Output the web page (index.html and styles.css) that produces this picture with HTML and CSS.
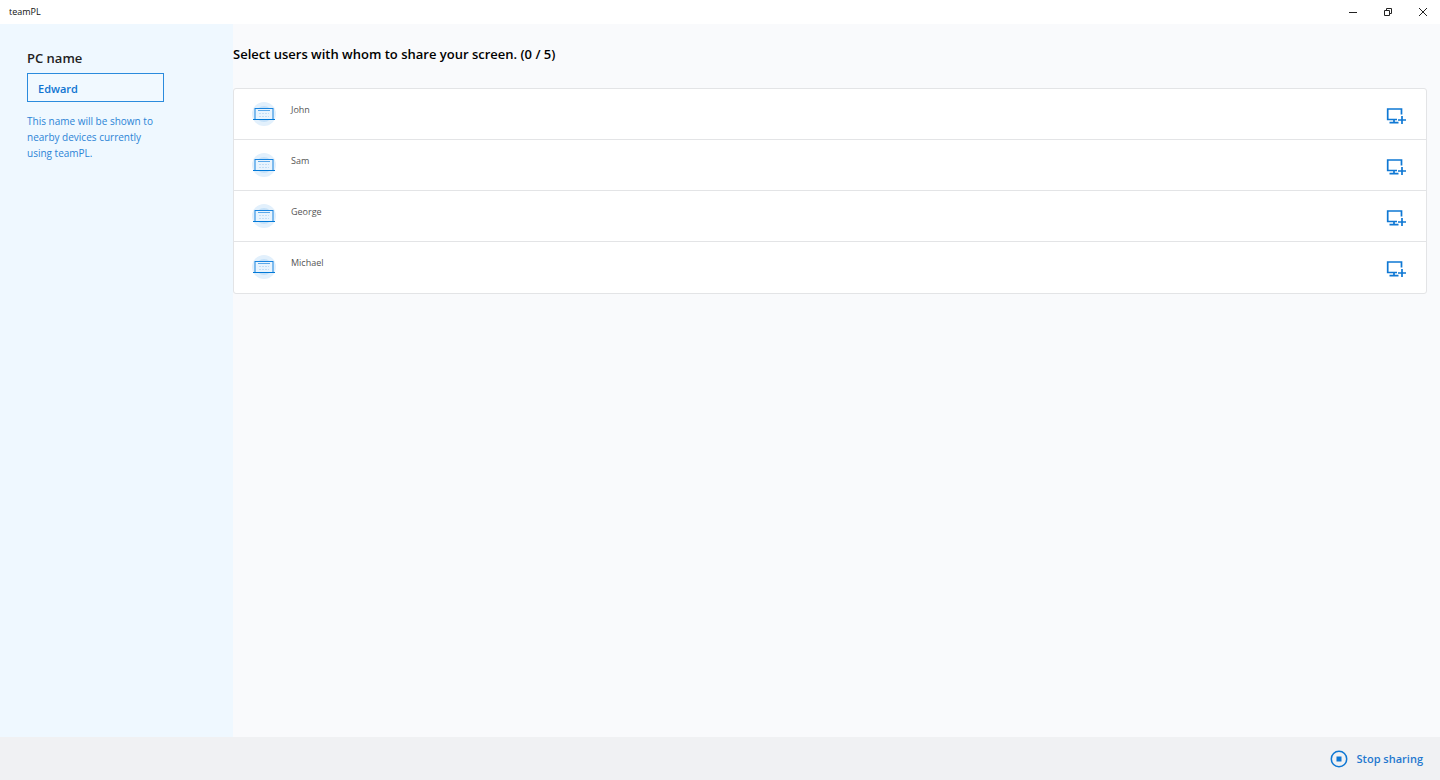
FILE: index.html
```html
<!DOCTYPE html>
<html lang="en">
<head>
    <meta charset="UTF-8">
    <meta name="viewport" content="width=device-width, initial-scale=1.0">
    <title>teamPL</title>
    <link rel="stylesheet" href="styles.css">
</head>
<body>
    <svg class="sprite" aria-hidden="true">
        <symbol id="laptop" viewBox="0 0 24 24">
            <circle cx="12" cy="12" r="12" fill="#e2f0fc"/>
            <circle cx="12" cy="12" r="8" fill="#c5e1f9"/>
            <rect x="3" y="6.500" width="18" height="11" fill="#e8f4fe" stroke="#1683df"/>
            <path d="M6 8.500h12" stroke="#5ba9ea"/>
            <path d="M7 11.500h10M7 14.500h10" stroke="#c2def6" stroke-dasharray="2 1"/>
            <path d="M1 17.500h22" stroke="#0078d7"/>
        </symbol>
        <symbol id="share" viewBox="0 0 20 18">
            <path d="M15.500 7.500V2H1.700v10.500h9.300M8 13v3M3.500 15.600h9M16 9v8M12 13h8" fill="none" stroke="#0f78d4" stroke-width="1.700"/>
        </symbol>
    </svg>

    <header class="titlebar">
        <span class="app-name">teamPL</span>
        <div class="window-buttons">
            <button type="button" aria-label="Minimize">
                <svg width="10" height="10" viewBox="0 0 10 10"><path d="M1 5.500h8"/></svg>
            </button>
            <button type="button" aria-label="Restore">
                <svg width="10" height="10" viewBox="0 0 10 10"><path d="M1.500 3.500h5v5h-5zM3.500 3.500v-2h5v5h-2"/></svg>
            </button>
            <button type="button" aria-label="Close">
                <svg width="10" height="10" viewBox="0 0 10 10"><path d="M1 1l8 8M9 1l-8 8"/></svg>
            </button>
        </div>
    </header>

    <div class="content">
        <aside class="sidebar">
            <label for="pcName">PC name</label>
            <input type="text" id="pcName" value="Edward">
            <p>This name will be shown to nearby devices currently using teamPL.</p>
        </aside>

        <main class="main">
            <h1>Select users with whom to share your screen. (0 / 5)</h1>
            <ul class="user-list">
                <li class="user">
                    <svg class="user-icon"><use href="#laptop"/></svg>
                    <span class="user-name">John</span>
                    <button type="button" class="share-button" aria-label="Share with John">
                        <svg><use href="#share"/></svg>
                    </button>
                </li>
                <li class="user">
                    <svg class="user-icon"><use href="#laptop"/></svg>
                    <span class="user-name">Sam</span>
                    <button type="button" class="share-button" aria-label="Share with Sam">
                        <svg><use href="#share"/></svg>
                    </button>
                </li>
                <li class="user">
                    <svg class="user-icon"><use href="#laptop"/></svg>
                    <span class="user-name">George</span>
                    <button type="button" class="share-button" aria-label="Share with George">
                        <svg><use href="#share"/></svg>
                    </button>
                </li>
                <li class="user">
                    <svg class="user-icon"><use href="#laptop"/></svg>
                    <span class="user-name">Michael</span>
                    <button type="button" class="share-button" aria-label="Share with Michael">
                        <svg><use href="#share"/></svg>
                    </button>
                </li>
            </ul>
        </main>
    </div>

    <footer class="footer">
        <button type="button" class="stop-button">
            <svg width="18" height="18" viewBox="0 0 18 18">
                <circle cx="9" cy="9" r="7.700" fill="none" stroke="#0f78d4" stroke-width="1.500"/>
                <rect x="6.500" y="6.500" width="5" height="5" fill="#0f78d4"/>
            </svg>
            Stop sharing
        </button>
    </footer>
</body>
</html>
```
FILE: styles.css
```css
* {
    box-sizing: border-box;
}

body {
    display: flex;
    flex-direction: column;
    min-height: 100vh;
    margin: 0;
    font-family: "Open Sans", "Noto Sans", sans-serif;
    background-color: #f9fafc;
    color: #111;
}

button {
    padding: 0;
    border: none;
    background: none;
    font-family: inherit;
    cursor: pointer;
}

.sprite {
    display: none;
}

.titlebar {
    display: flex;
    align-items: center;
    justify-content: space-between;
    height: 24px;
    padding-left: 9px;
    background-color: #fff;
}

.app-name {
    font-size: 9px;
    line-height: 12px;
}

.window-buttons {
    display: flex;
}

.window-buttons button {
    display: flex;
    align-items: center;
    justify-content: center;
    width: 35px;
    height: 24px;
}

.window-buttons path {
    fill: none;
    stroke: #222;
}

.content {
    display: flex;
    flex: 1;
}

.sidebar {
    flex: none;
    width: 233px;
    padding: 24px 69px 24px 27px;
    background-color: #eff8ff;
}

.sidebar label {
    display: block;
    margin-bottom: 5px;
    font-size: 13px;
    font-weight: 600;
    line-height: 20px;
    color: #222;
}

.sidebar input {
    display: block;
    width: 100%;
    height: 29px;
    padding: 2px 10px 0;
    border: 1px solid #2b8bdd;
    background-color: #f1f9ff;
    font-family: inherit;
    font-size: 11px;
    font-weight: 600;
    color: #0f74d1;
}

.sidebar p {
    margin: 11px 0 0;
    font-size: 10px;
    line-height: 16px;
    color: #2c84d6;
}

.main {
    flex: 1;
    padding-right: 13px;
}

h1 {
    margin: 20px 0 24px;
    font-size: 13px;
    font-weight: 600;
    line-height: 20px;
    color: #000;
}

.user-list {
    margin: 0;
    padding: 0;
    border: 1px solid #e3e4e6;
    border-radius: 3px;
    background-color: #fff;
    list-style: none;
}

.user {
    display: flex;
    align-items: flex-start;
    height: 51px;
    padding: 13px 20px 0 18px;
    border-bottom: 1px solid #e3e4e6;
}

.user:last-child {
    border-bottom: none;
}

.user-icon {
    width: 24px;
    height: 24px;
}

.user-name {
    flex: 1;
    margin-left: 15px;
    font-size: 9px;
    line-height: 16px;
    color: #555;
}

.share-button {
    margin-top: 5px;
}

.share-button svg {
    display: block;
    width: 20px;
    height: 18px;
}

.footer {
    display: flex;
    align-items: center;
    justify-content: flex-end;
    height: 43px;
    padding-right: 17px;
    background-color: #f0f1f3;
}

.stop-button {
    display: flex;
    align-items: center;
    gap: 9px;
    font-size: 11px;
    font-weight: 600;
    color: #1f78cf;
}
```
